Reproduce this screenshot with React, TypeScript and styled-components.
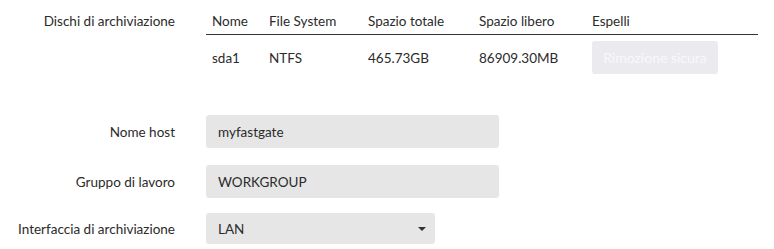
import React from "react";
import styled, { createGlobalStyle } from "styled-components";

const Global = createGlobalStyle`
  html, body { margin: 0; padding: 0; background: #fff; }
  body { font-family: "Lato", "Open Sans", sans-serif; font-size: 13.5px; color: #2b2b2b; }
`;

const Page = styled.div`
  width: 774px;
  padding-top: 8px;
  display: flex;
  flex-direction: column;
`;

const Row = styled.div<{ $mb?: number; $align?: string }>`
  display: grid;
  grid-template-columns: 175px 1fr;
  column-gap: 31px;
  align-items: ${(p) => p.$align || "center"};
  margin-bottom: ${(p) => p.$mb ?? 0}px;
`;

const Label = styled.div<{ $pt?: number }>`
  text-align: right;
  padding-top: ${(p) => p.$pt ?? 0}px;
  color: #2b2b2b;
`;

const Table = styled.div`
  width: 552px;
  display: flex;
  flex-direction: column;
`;

const TRow = styled.div<{ $head?: boolean }>`
  display: grid;
  grid-template-columns: 57px 99px 111px 113px 172px;
  align-items: center;
  height: ${(p) => (p.$head ? 27 : 45)}px;
  border-bottom: ${(p) => (p.$head ? "1.5px solid #333" : "none")};
  box-sizing: border-box;
`;

const Cell = styled.div`
  padding-left: 6px;
  color: #2b2b2b;
  white-space: nowrap;
`;

const SafeButton = styled.button`
  width: 126px;
  height: 33px;
  border: none;
  border-radius: 3px;
  background: #ebebef;
  color: #f8f8fa;
  font-family: inherit;
  font-size: 14px;
  padding: 0;
  cursor: not-allowed;
`;

const Field = styled.div<{ $w: number; $h: number }>`
  width: ${(p) => p.$w}px;
  height: ${(p) => p.$h}px;
  background: #e6e6e6;
  border-radius: 3px;
  display: flex;
  align-items: center;
  justify-content: space-between;
  padding: 0 9px 0 12px;
  box-sizing: border-box;
  color: #2b2b2b;
`;

const Caret = styled.span`
  width: 0;
  height: 0;
  border-left: 4.5px solid transparent;
  border-right: 4.5px solid transparent;
  border-top: 4.5px solid #333;
  margin-top: 1px;
`;

export default function App() {
  return (
    <>
      <Global />
      <Page>
        <Row $align="start" $mb={35}>
          <Label $pt={5}>Dischi di archiviazione</Label>
          <Table>
            <TRow $head>
              <Cell>Nome</Cell>
              <Cell>File System</Cell>
              <Cell>Spazio totale</Cell>
              <Cell>Spazio libero</Cell>
              <Cell>Espelli</Cell>
            </TRow>
            <TRow>
              <Cell>sda1</Cell>
              <Cell>NTFS</Cell>
              <Cell>465.73GB</Cell>
              <Cell>86909.30MB</Cell>
              <Cell>
                <SafeButton disabled>Rimozione sicura</SafeButton>
              </Cell>
            </TRow>
          </Table>
        </Row>
        <Row $mb={17}>
          <Label>Nome host</Label>
          <Field $w={293} $h={33}>myfastgate</Field>
        </Row>
        <Row $mb={15}>
          <Label>Gruppo di lavoro</Label>
          <Field $w={293} $h={33}>WORKGROUP</Field>
        </Row>
        <Row>
          <Label>Interfaccia di archiviazione</Label>
          <Field $w={229} $h={31}>
            LAN
            <Caret />
          </Field>
        </Row>
      </Page>
    </>
  );
}
